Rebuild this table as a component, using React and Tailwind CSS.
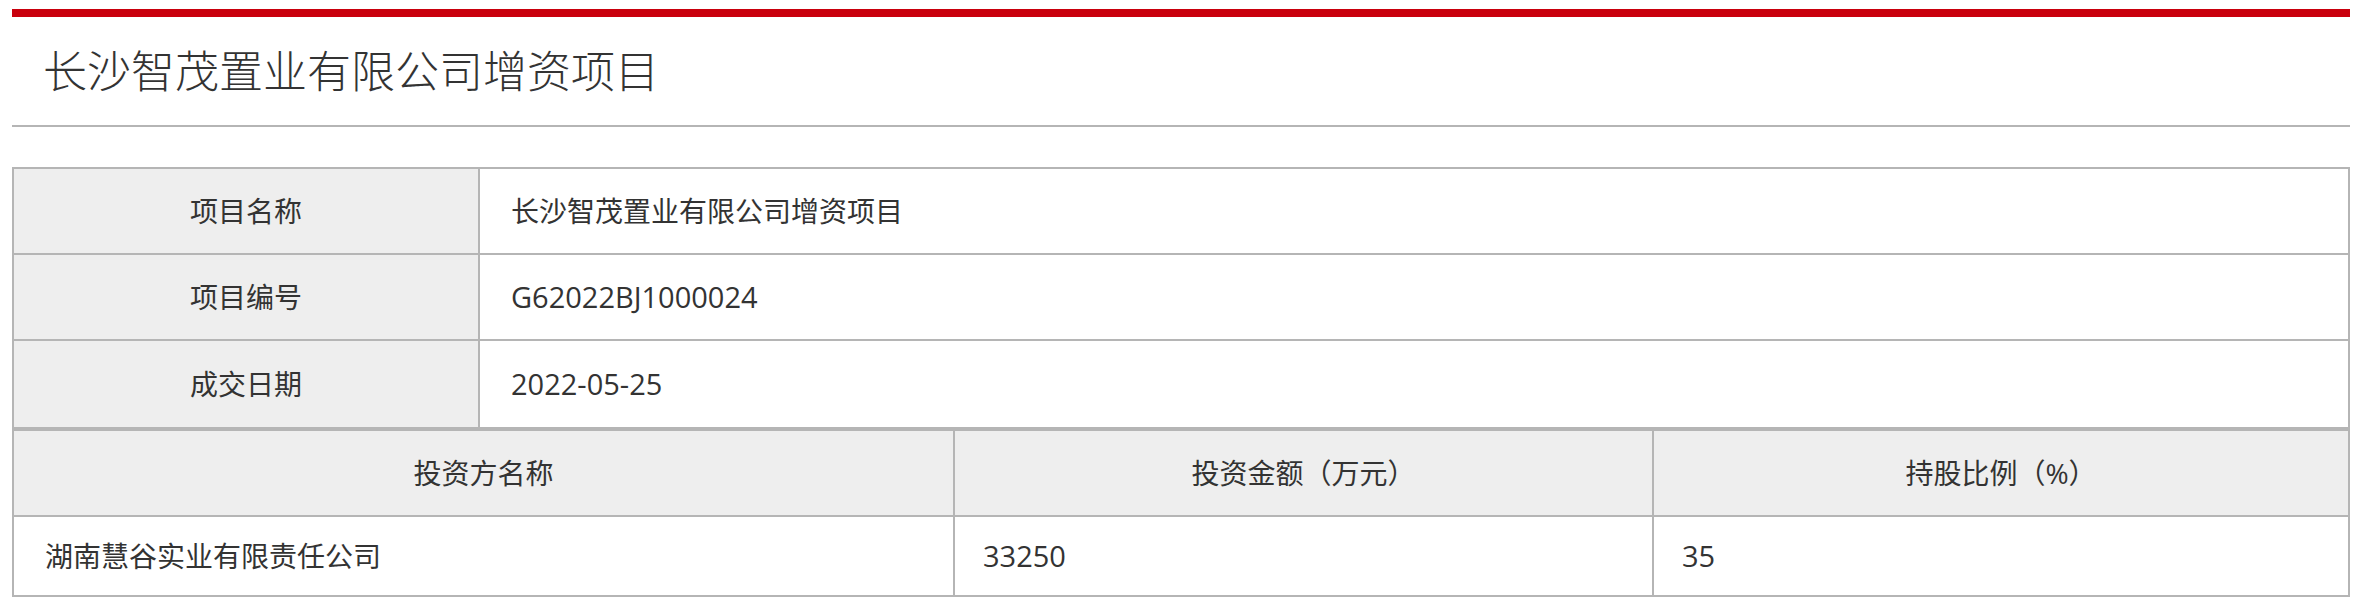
import React from "react";

const info = [
  { label: "项目名称", value: "长沙智茂置业有限公司增资项目" },
  { label: "项目编号", value: "G62022BJ1000024", latin: true },
  { label: "成交日期", value: "2022-05-25", latin: true },
];

const investors = [
  { name: "湖南慧谷实业有限责任公司", amount: "33250", ratio: "35" },
];

function App() {
  return (
    <div
      className="px-[12px] pt-[9px] text-[#333] bg-white min-h-screen"
      style={{ fontFamily: '"Open Sans", "Noto Sans CJK SC", sans-serif' }}
    >
      <div className="h-[8px] bg-[#c9000d]"></div>
      <div className="h-[110px] flex items-center pl-[31px] border-b-2 border-[#b5b5b5]">
        <h1 className="text-[44px] font-light leading-none text-[#333]">
          长沙智茂置业有限公司增资项目
        </h1>
      </div>

      <div className="mt-[40px] border-2 border-[#b5b5b5] text-[28px]">
        {info.map((row, i) => (
          <div
            key={row.label}
            className={
              "flex h-[86px] " +
              (i < info.length - 1 ? "border-b-2 border-[#b5b5b5]" : "h-[84px]")
            }
          >
            <div className="w-[466px] shrink-0 bg-[#eeeeee] border-r-2 border-[#b5b5b5] flex items-center justify-center">
              {row.label}
            </div>
            <div className="flex-1 flex items-center pl-[31px]">
              {row.latin ? (
                <span className="text-[29px]">{row.value}</span>
              ) : (
                row.value
              )}
            </div>
          </div>
        ))}
      </div>

      <div className="border-2 border-[#b5b5b5] text-[28px]">
        <div className="flex h-[86px] bg-[#eeeeee] border-b-2 border-[#b5b5b5]">
          <div className="w-[941px] shrink-0 border-r-2 border-[#b5b5b5] flex items-center justify-center">
            投资方名称
          </div>
          <div className="w-[699px] shrink-0 border-r-2 border-[#b5b5b5] flex items-center justify-center">
            投资金额（万元）
          </div>
          <div className="flex-1 flex items-center justify-center">持股比例（%）</div>
        </div>
        {investors.map((r) => (
          <div key={r.name} className="flex h-[78px]">
            <div className="w-[941px] shrink-0 border-r-2 border-[#b5b5b5] flex items-center pl-[31px]">
              {r.name}
            </div>
            <div className="w-[699px] shrink-0 border-r-2 border-[#b5b5b5] flex items-center pl-[28px]">
              <span className="text-[29px]">{r.amount}</span>
            </div>
            <div className="flex-1 flex items-center pl-[28px]">
              <span className="text-[29px]">{r.ratio}</span>
            </div>
          </div>
        ))}
      </div>
    </div>
  );
}

export default App;
